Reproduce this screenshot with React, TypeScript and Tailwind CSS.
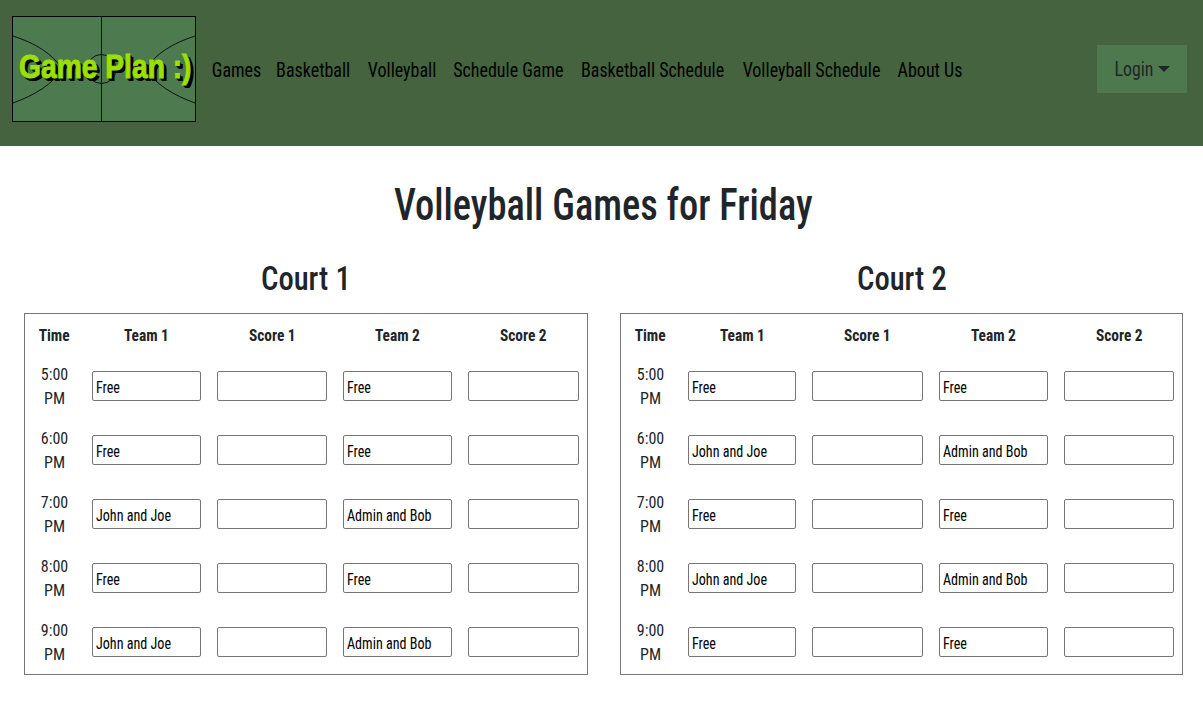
import React from "react"

const nav = [
  { label: "Games", w: "w-[48px]" },
  { label: "Basketball", w: "w-[75px]" },
  { label: "Volleyball", w: "w-[70px]" },
  { label: "Schedule Game", w: "w-[111px]" },
  { label: "Basketball Schedule", w: "w-[145px]" },
  { label: "Volleyball Schedule", w: "w-[140px]" },
  { label: "About Us", w: "w-[65px]" },
]
const font = "[font-family:'Roboto_Condensed','Liberation_Sans',sans-serif]"

const times = ["5:00 PM", "6:00 PM", "7:00 PM", "8:00 PM", "9:00 PM"]
const court1 = [
  ["Free", "Free"],
  ["Free", "Free"],
  ["John and Joe", "Admin and Bob"],
  ["Free", "Free"],
  ["John and Joe", "Admin and Bob"],
]
const court2 = [
  ["Free", "Free"],
  ["John and Joe", "Admin and Bob"],
  ["Free", "Free"],
  ["John and Joe", "Admin and Bob"],
  ["Free", "Free"],
]

function Logo() {
  return (
    <div className="relative w-[184px] h-[106px] shrink-0 border border-black bg-[#4d7a4f]">
      <svg viewBox="0 0 182 104" className="absolute inset-0 w-full h-full" fill="none" stroke="#111" strokeWidth="1">
        <path d="M88.5 0V104" />
        <circle cx="88.5" cy="52" r="14.5" />
        <path d="M0 19C22 26 40 37 49 52C40 67 22 78 0 86" />
        <path d="M182 19C160 26 142 37 133 52C142 67 160 78 182 86" />
      </svg>
      <span className="absolute left-[6px] top-[31px] origin-left scale-x-[0.83] whitespace-nowrap font-['Liberation_Sans'] font-bold text-[34px] leading-[36px] text-[#9be000] [-webkit-text-stroke:1px_#9be000] [text-shadow:1px_1px_0_#000,2px_2px_0_#000,3px_3px_0_#000,4px_3px_0_#000]">
        Game Plan :)
      </span>
    </div>
  )
}

function Court({ name, rows, cols }: { name: string; rows: string[][]; cols: number[] }) {
  return (
    <div>
      <h2 className="text-[34px] leading-[38px] font-medium text-[#212529] text-center mb-[16px]">
        <span className="inline-block scale-x-[0.9]">{name}</span>
      </h2>
      <div className="border border-[#767676]">
        <table className="w-full table-fixed border-collapse">
          <colgroup>
            {cols.map((w, i) => <col key={i} style={{ width: w }} />)}
          </colgroup>
          <thead>
            <tr className="h-[40px] text-[16px] font-bold text-[#212529]">
              {["Time", "Team 1", "Score 1", "Team 2", "Score 2"].map((h) => (
                <th key={h} className="pt-[3px]"><span className="inline-block scale-x-[0.96]">{h}</span></th>
              ))}
            </tr>
          </thead>
          <tbody>
            {rows.map((r, i) => (
              <tr key={i} className="h-[64px]">
                <td className="text-center text-[16px] leading-[24px] text-[#212529] px-[14px] pt-[2px]">{times[i]}</td>
                <td className="px-2"><Box value={r[0]} /></td>
                <td className="px-2"><Box value="" /></td>
                <td className="px-2"><Box value={r[1]} /></td>
                <td className="px-2"><Box value="" /></td>
              </tr>
            ))}
          </tbody>
        </table>
      </div>
    </div>
  )
}

function Box({ value }: { value: string }) {
  return (
    <div className="w-full h-[30px] px-[3px] pt-[2px] text-[16px] leading-[28px] text-black bg-white border border-[#767676] rounded-[2px] whitespace-nowrap">
      <span className="inline-block origin-left scale-x-[0.88]">{value}</span>
    </div>
  )
}

export default function App() {
  return (
    <div className={`${font} bg-white min-h-[711px]`}>
      <header className="h-[146px] bg-[#44633e] flex items-center pl-[12px] pr-[16px]">
        <div className="-mt-[9px] mr-[8px]"><Logo /></div>
        <nav className="flex items-center gap-[16px] pl-[8px] -mt-[6px] text-[20px] text-black">
          {nav.map((n) => (
            <a key={n.label} href="#" className={`${n.w} flex justify-center whitespace-nowrap`}>
              <span className="inline-block scale-x-[0.9]">{n.label}</span>
            </a>
          ))}
        </nav>
        <button className="ml-auto -mt-[8px] w-[90px] h-[48px] bg-[#4e784e] text-[#212529] text-[20px] flex items-center justify-center gap-[5px]">
          <span className="inline-block w-[44px] -mx-[2.5px] text-center scale-x-[0.89]">Login</span>
          <span className="w-0 h-0 border-x-[6px] border-x-transparent border-t-[6px] border-t-[#212529]" />
        </button>
      </header>
      <main className="pl-[24px] pr-[20px]">
        <h1 className="text-[44px] leading-[48px] font-medium text-[#212529] text-center pt-[35px] mb-[30px]">
          <span className="inline-block scale-x-[0.875]">Volleyball Games for Friday</span>
        </h1>
        <div className="grid grid-cols-[564px_563px] gap-x-[32px]">
          <Court name="Court 1" rows={court1} cols={[59, 125, 126, 125, 127]} />
          <Court name="Court 2" rows={court2} cols={[59, 124, 127, 125, 126]} />
        </div>
      </main>
    </div>
  )
}
